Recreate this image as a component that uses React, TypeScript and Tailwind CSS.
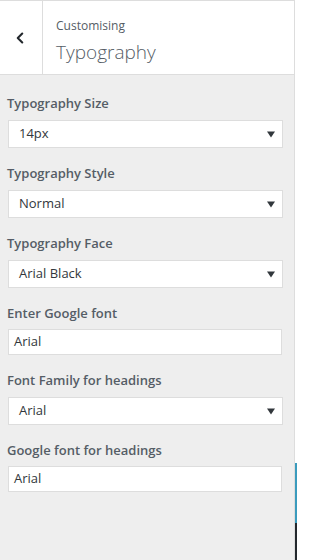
import { ChevronLeft } from "lucide-react";

type Field = {
  label: string;
  value: string;
  kind: "select" | "text";
};

const FIELDS: Field[] = [
  { label: "Typography Size", value: "14px", kind: "select" },
  { label: "Typography Style", value: "Normal", kind: "select" },
  { label: "Typography Face", value: "Arial Black", kind: "select" },
  { label: "Enter Google font", value: "Arial", kind: "text" },
  { label: "Font Family for headings", value: "Arial", kind: "select" },
  { label: "Google font for headings", value: "Arial", kind: "text" },
];

function Control({ field }: { field: Field }) {
  if (field.kind === "select") {
    return (
      <div className="flex h-[28px] w-[275px] items-center justify-between border border-[#dddddd] bg-white pl-[10px] pr-[7px] text-[13px] text-[#32373c]">
        <span>{field.value}</span>
        <svg width="8" height="7" viewBox="0 0 8 7" className="mt-[1px]">
          <path d="M0 0.5 H8 L4 6.5 Z" fill="#32373c" />
        </svg>
      </div>
    );
  }
  return (
    <div className="flex h-[26px] w-[274px] items-center border border-[#dddddd] bg-white pl-[5px] text-[13px] text-[#32373c]">
      {field.value}
    </div>
  );
}

export default function App() {
  return (
    <div
      className="flex h-[560px] w-[309px] bg-white"
      style={{ fontFamily: '"Open Sans", "Noto Sans", sans-serif' }}
    >
      {/* customizer sidebar */}
      <div className="flex w-[295px] flex-col border-r border-[#dddddd] bg-[#eeeeee]">
        <div className="flex h-[75px] border-y border-[#dddddd] bg-white">
          <div className="flex w-[43px] items-center border-r border-[#dddddd] pl-[11px] text-[#23282d]">
            <ChevronLeft size={18} strokeWidth={2.8} />
          </div>
          <div className="flex flex-col pl-[13px] pt-[16px]">
            <span className="text-[12px] leading-[18px] text-[#555d66]">
              Customising
            </span>
            <span className="mt-[5px] text-[19px] font-light leading-[24px] text-[#555d66]">
              Typography
            </span>
          </div>
        </div>

        <div className="flex flex-col pl-[8px] pt-[18px]">
          {FIELDS.map((f) => (
            <div key={f.label} className="mb-[15px] flex flex-col">
              <span
                className={
                  f.kind === "select"
                    ? "-ml-[1px] mb-[7px] text-[13px] font-semibold leading-[20px] text-[#555d66]"
                    : "-ml-[1px] mb-[6px] text-[13px] font-semibold leading-[20px] text-[#555d66]"
                }
              >
                {f.label}
              </span>
              <Control field={f} />
            </div>
          ))}
        </div>
      </div>

      {/* edge of preview frame */}
      <div className="flex w-[2px] flex-col">
        <div className="h-[463px]" />
        <div className="h-[60px] bg-[#3a9bbd]" />
        <div className="flex-1 bg-[#23282d]" />
      </div>
    </div>
  );
}
